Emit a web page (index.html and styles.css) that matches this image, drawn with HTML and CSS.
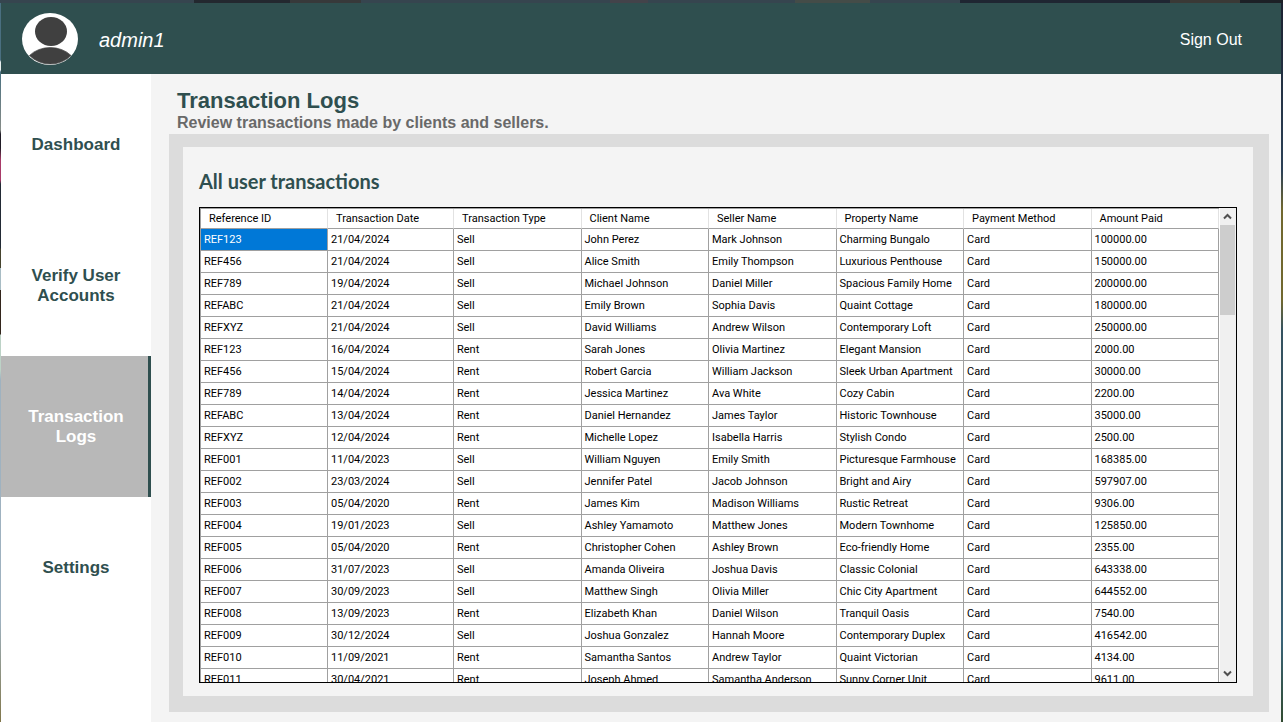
FILE: index.html
```html
<!DOCTYPE html>
<html lang="en">
<head>
<meta charset="utf-8">
<title>Transaction Logs</title>
<link rel="stylesheet" href="styles.css">
</head>
<body>
<div class="app">
  <header class="topbar">
    <svg class="avatar" viewBox="0 0 56 52" aria-hidden="true">
      <ellipse cx="28" cy="26" rx="28" ry="26" fill="#fff"/>
      <ellipse cx="29" cy="18.500" rx="16" ry="14.500" fill="#404040"/>
      <path d="M7.500 42.500A26 20 0 0 1 49 42.500A28 26 0 0 1 7.500 42.500Z" fill="#404040" stroke="#404040" stroke-width="0.700"/>
    </svg>
    <span class="user">admin1</span>
    <button class="signout" type="button">Sign Out</button>
  </header>
  <div class="body">
    <nav class="sidebar">
      <a class="nav-item" href="#dashboard">Dashboard</a>
      <a class="nav-item" href="#verify">Verify User Accounts</a>
      <a class="nav-item active" href="#logs" aria-current="page">Transaction Logs</a>
      <a class="nav-item" href="#settings">Settings</a>
    </nav>
    <main class="content">
      <div class="heading">
        <h1>Transaction Logs</h1>
        <p>Review transactions made by clients and sellers.</p>
      </div>
      <section class="panel">
        <h2>All user transactions</h2>
        <div class="grid">
          <div class="rows">
            <table>
              <colgroup><col class="col-id"><col class="col-date"><col span="6"></colgroup>
              <thead><tr><th>Reference ID</th><th>Transaction Date</th><th>Transaction Type</th><th>Client Name</th><th>Seller Name</th><th>Property Name</th><th>Payment Method</th><th>Amount Paid</th></tr></thead>
              <tbody>
                <tr><td class="selected">REF123</td><td>21/04/2024</td><td>Sell</td><td>John Perez</td><td>Mark Johnson</td><td>Charming Bungalo</td><td>Card</td><td>100000.00</td></tr>
                <tr><td>REF456</td><td>21/04/2024</td><td>Sell</td><td>Alice Smith</td><td>Emily Thompson</td><td>Luxurious Penthouse</td><td>Card</td><td>150000.00</td></tr>
                <tr><td>REF789</td><td>19/04/2024</td><td>Sell</td><td>Michael Johnson</td><td>Daniel Miller</td><td>Spacious Family Home</td><td>Card</td><td>200000.00</td></tr>
                <tr><td>REFABC</td><td>21/04/2024</td><td>Sell</td><td>Emily Brown</td><td>Sophia Davis</td><td>Quaint Cottage</td><td>Card</td><td>180000.00</td></tr>
                <tr><td>REFXYZ</td><td>21/04/2024</td><td>Sell</td><td>David Williams</td><td>Andrew Wilson</td><td>Contemporary Loft</td><td>Card</td><td>250000.00</td></tr>
                <tr><td>REF123</td><td>16/04/2024</td><td>Rent</td><td>Sarah Jones</td><td>Olivia Martinez</td><td>Elegant Mansion</td><td>Card</td><td>2000.00</td></tr>
                <tr><td>REF456</td><td>15/04/2024</td><td>Rent</td><td>Robert Garcia</td><td>William Jackson</td><td>Sleek Urban Apartment</td><td>Card</td><td>30000.00</td></tr>
                <tr><td>REF789</td><td>14/04/2024</td><td>Rent</td><td>Jessica Martinez</td><td>Ava White</td><td>Cozy Cabin</td><td>Card</td><td>2200.00</td></tr>
                <tr><td>REFABC</td><td>13/04/2024</td><td>Rent</td><td>Daniel Hernandez</td><td>James Taylor</td><td>Historic Townhouse</td><td>Card</td><td>35000.00</td></tr>
                <tr><td>REFXYZ</td><td>12/04/2024</td><td>Rent</td><td>Michelle Lopez</td><td>Isabella Harris</td><td>Stylish Condo</td><td>Card</td><td>2500.00</td></tr>
                <tr><td>REF001</td><td>11/04/2023</td><td>Sell</td><td>William Nguyen</td><td>Emily Smith</td><td>Picturesque Farmhouse</td><td>Card</td><td>168385.00</td></tr>
                <tr><td>REF002</td><td>23/03/2024</td><td>Sell</td><td>Jennifer Patel</td><td>Jacob Johnson</td><td>Bright and Airy</td><td>Card</td><td>597907.00</td></tr>
                <tr><td>REF003</td><td>05/04/2020</td><td>Rent</td><td>James Kim</td><td>Madison Williams</td><td>Rustic Retreat</td><td>Card</td><td>9306.00</td></tr>
                <tr><td>REF004</td><td>19/01/2023</td><td>Sell</td><td>Ashley Yamamoto</td><td>Matthew Jones</td><td>Modern Townhome</td><td>Card</td><td>125850.00</td></tr>
                <tr><td>REF005</td><td>05/04/2020</td><td>Rent</td><td>Christopher Cohen</td><td>Ashley Brown</td><td>Eco-friendly Home</td><td>Card</td><td>2355.00</td></tr>
                <tr><td>REF006</td><td>31/07/2023</td><td>Sell</td><td>Amanda Oliveira</td><td>Joshua Davis</td><td>Classic Colonial</td><td>Card</td><td>643338.00</td></tr>
                <tr><td>REF007</td><td>30/09/2023</td><td>Sell</td><td>Matthew Singh</td><td>Olivia Miller</td><td>Chic City Apartment</td><td>Card</td><td>644552.00</td></tr>
                <tr><td>REF008</td><td>13/09/2023</td><td>Rent</td><td>Elizabeth Khan</td><td>Daniel Wilson</td><td>Tranquil Oasis</td><td>Card</td><td>7540.00</td></tr>
                <tr><td>REF009</td><td>30/12/2024</td><td>Sell</td><td>Joshua Gonzalez</td><td>Hannah Moore</td><td>Contemporary Duplex</td><td>Card</td><td>416542.00</td></tr>
                <tr><td>REF010</td><td>11/09/2021</td><td>Rent</td><td>Samantha Santos</td><td>Andrew Taylor</td><td>Quaint Victorian</td><td>Card</td><td>4134.00</td></tr>
                <tr><td>REF011</td><td>30/04/2021</td><td>Rent</td><td>Joseph Ahmed</td><td>Samantha Anderson</td><td>Sunny Corner Unit</td><td>Card</td><td>9611.00</td></tr>
              </tbody>
            </table>
          </div>
          <div class="scrollbar">
            <button type="button" aria-label="Scroll up"><svg viewBox="0 0 16 17"><path d="M4 10.500 7.500 7 11 10.500" fill="none" stroke="#505050" stroke-width="2"/></svg></button>
            <div class="thumb"></div>
            <button class="down" type="button" aria-label="Scroll down"><svg viewBox="0 0 16 17"><path d="M4 6.500 7.500 10 11 6.500" fill="none" stroke="#505050" stroke-width="2"/></svg></button>
          </div>
        </div>
      </section>
    </main>
  </div>
</div>
</body>
</html>
```
FILE: styles.css
```css
* { box-sizing: border-box; }

body {
  margin: 0;
  font-family: "Liberation Sans", Arial, sans-serif;
  color: #2f4f4f;
}

button {
  border: 0;
  padding: 0;
  background: none;
  font: inherit;
  color: inherit;
}

/* Thin strip of desktop showing round the window */
.app {
  display: flex;
  flex-direction: column;
  height: 100vh;
  padding: 3px 2px 0 1px;
  background:
    linear-gradient(to right, #36454f 0 194px, #23282f 194px 290px, #37393a 290px 361px, #36454f 361px 610px, #43434a 610px 648px, #36454f 648px 708px, #36454f 708px 795px, #444c48 795px 870px, #36454f 870px 960px, #1f2632 960px 1170px, #3a3936 1170px 1240px, #1c2026 1240px) top / 100% 3px no-repeat,
    linear-gradient(to bottom, #4a6f80 0 60px, #e8eeee 62px 70px, #4a7080 72px, #868c88 130px, #201c26 134px 148px, #a83a68 160px 180px, #222a35 184px 248px, #45432e 249px 268px, #a8bcc4 268px 290px, #33251c 290px 334px, #bcd2c6 335px 370px, #9fb2c0 380px 620px, #80764a) left / 1px 100% no-repeat,
    linear-gradient(to bottom, #1b2230, #2b4056 170px, #71682f 210px 300px, #345260 330px 500px, #3a6478 640px, #304a30) right / 2px 100% no-repeat;
}

.topbar {
  display: flex;
  align-items: center;
  flex: none;
  height: 71px;
  padding: 0 39px 0 21px;
  background: #2f4f4f;
  color: #fff;
}

.avatar { width: 56px; height: 52px; }

.user {
  margin: 4px auto 0 21px;
  font-size: 20px;
  font-style: italic;
}

.signout { margin-top: 2px; font-size: 16px; }

.body { display: flex; flex: 1; min-height: 0; }

.sidebar { flex: none; width: 150px; background: #fff; }

.nav-item {
  display: flex;
  align-items: center;
  justify-content: center;
  height: 141px;
  padding: 0 20px;
  font-size: 17px;
  line-height: 20px;
  font-weight: bold;
  text-align: center;
  text-decoration: none;
  color: #2f4f4f;
}

.nav-item.active {
  padding-right: 17px;
  border-right: 3px solid #2f4f4f;
  background: #b8b8b8;
  color: #fff;
}

.content {
  display: flex;
  flex-direction: column;
  flex: 1;
  min-width: 0;
  padding: 15px 12px 10px 18px;
  background: #f4f4f4;
}

.heading { height: 45px; padding-left: 8px; }

h1, h2, p { margin: 0; }

h1 { font-size: 22px; line-height: 24px; }

.heading p {
  font-size: 16px;
  line-height: 20px;
  font-weight: bold;
  color: #696969;
}

.panel {
  display: flex;
  flex-direction: column;
  flex: 1;
  min-height: 0;
  padding: 20px 16px 13px;
  border: solid #dcdcdc;
  border-width: 13px 16px 16px 14px;
}

h2 {
  margin-bottom: 12px;
  font-family: Lato, sans-serif;
  font-size: 20px;
  line-height: 28px;
}

.grid {
  display: flex;
  flex: 1;
  min-height: 0;
  border: 1px solid #000;
  background: #fff;
}

.rows { flex: 1; min-width: 0; margin-right: 1px; overflow: hidden; }

table {
  width: 100%;
  table-layout: fixed;
  border-collapse: separate;
  border-spacing: 0;
  border: solid #a0a0a0;
  border-width: 1px 0 0 1px;
  font-family: Roboto, sans-serif;
  font-size: 11px;
  line-height: 14px;
  color: #000;
}

.col-id { width: 127px; }
.col-date { width: 126px; }

th, td {
  padding: 0 3px;
  border: solid #a0a0a0;
  border-width: 0 1px 1px 0;
  text-align: left;
  white-space: nowrap;
}

th {
  height: 20px;
  padding-left: 8px;
  border-right-color: #e2e2e2;
  font-weight: normal;
}

td { height: 22px; }

.selected { background: #0078d7; color: #fff; }

.scrollbar {
  display: flex;
  flex-direction: column;
  flex: none;
  width: 16px;
  background: #f0f0f0;
}

.scrollbar button { height: 17px; }
.scrollbar svg { display: block; width: 16px; height: 17px; }
.scrollbar .down { margin-top: auto; }

.thumb { height: 90px; margin-right: 1px; background: #cdcdcd; }
```
